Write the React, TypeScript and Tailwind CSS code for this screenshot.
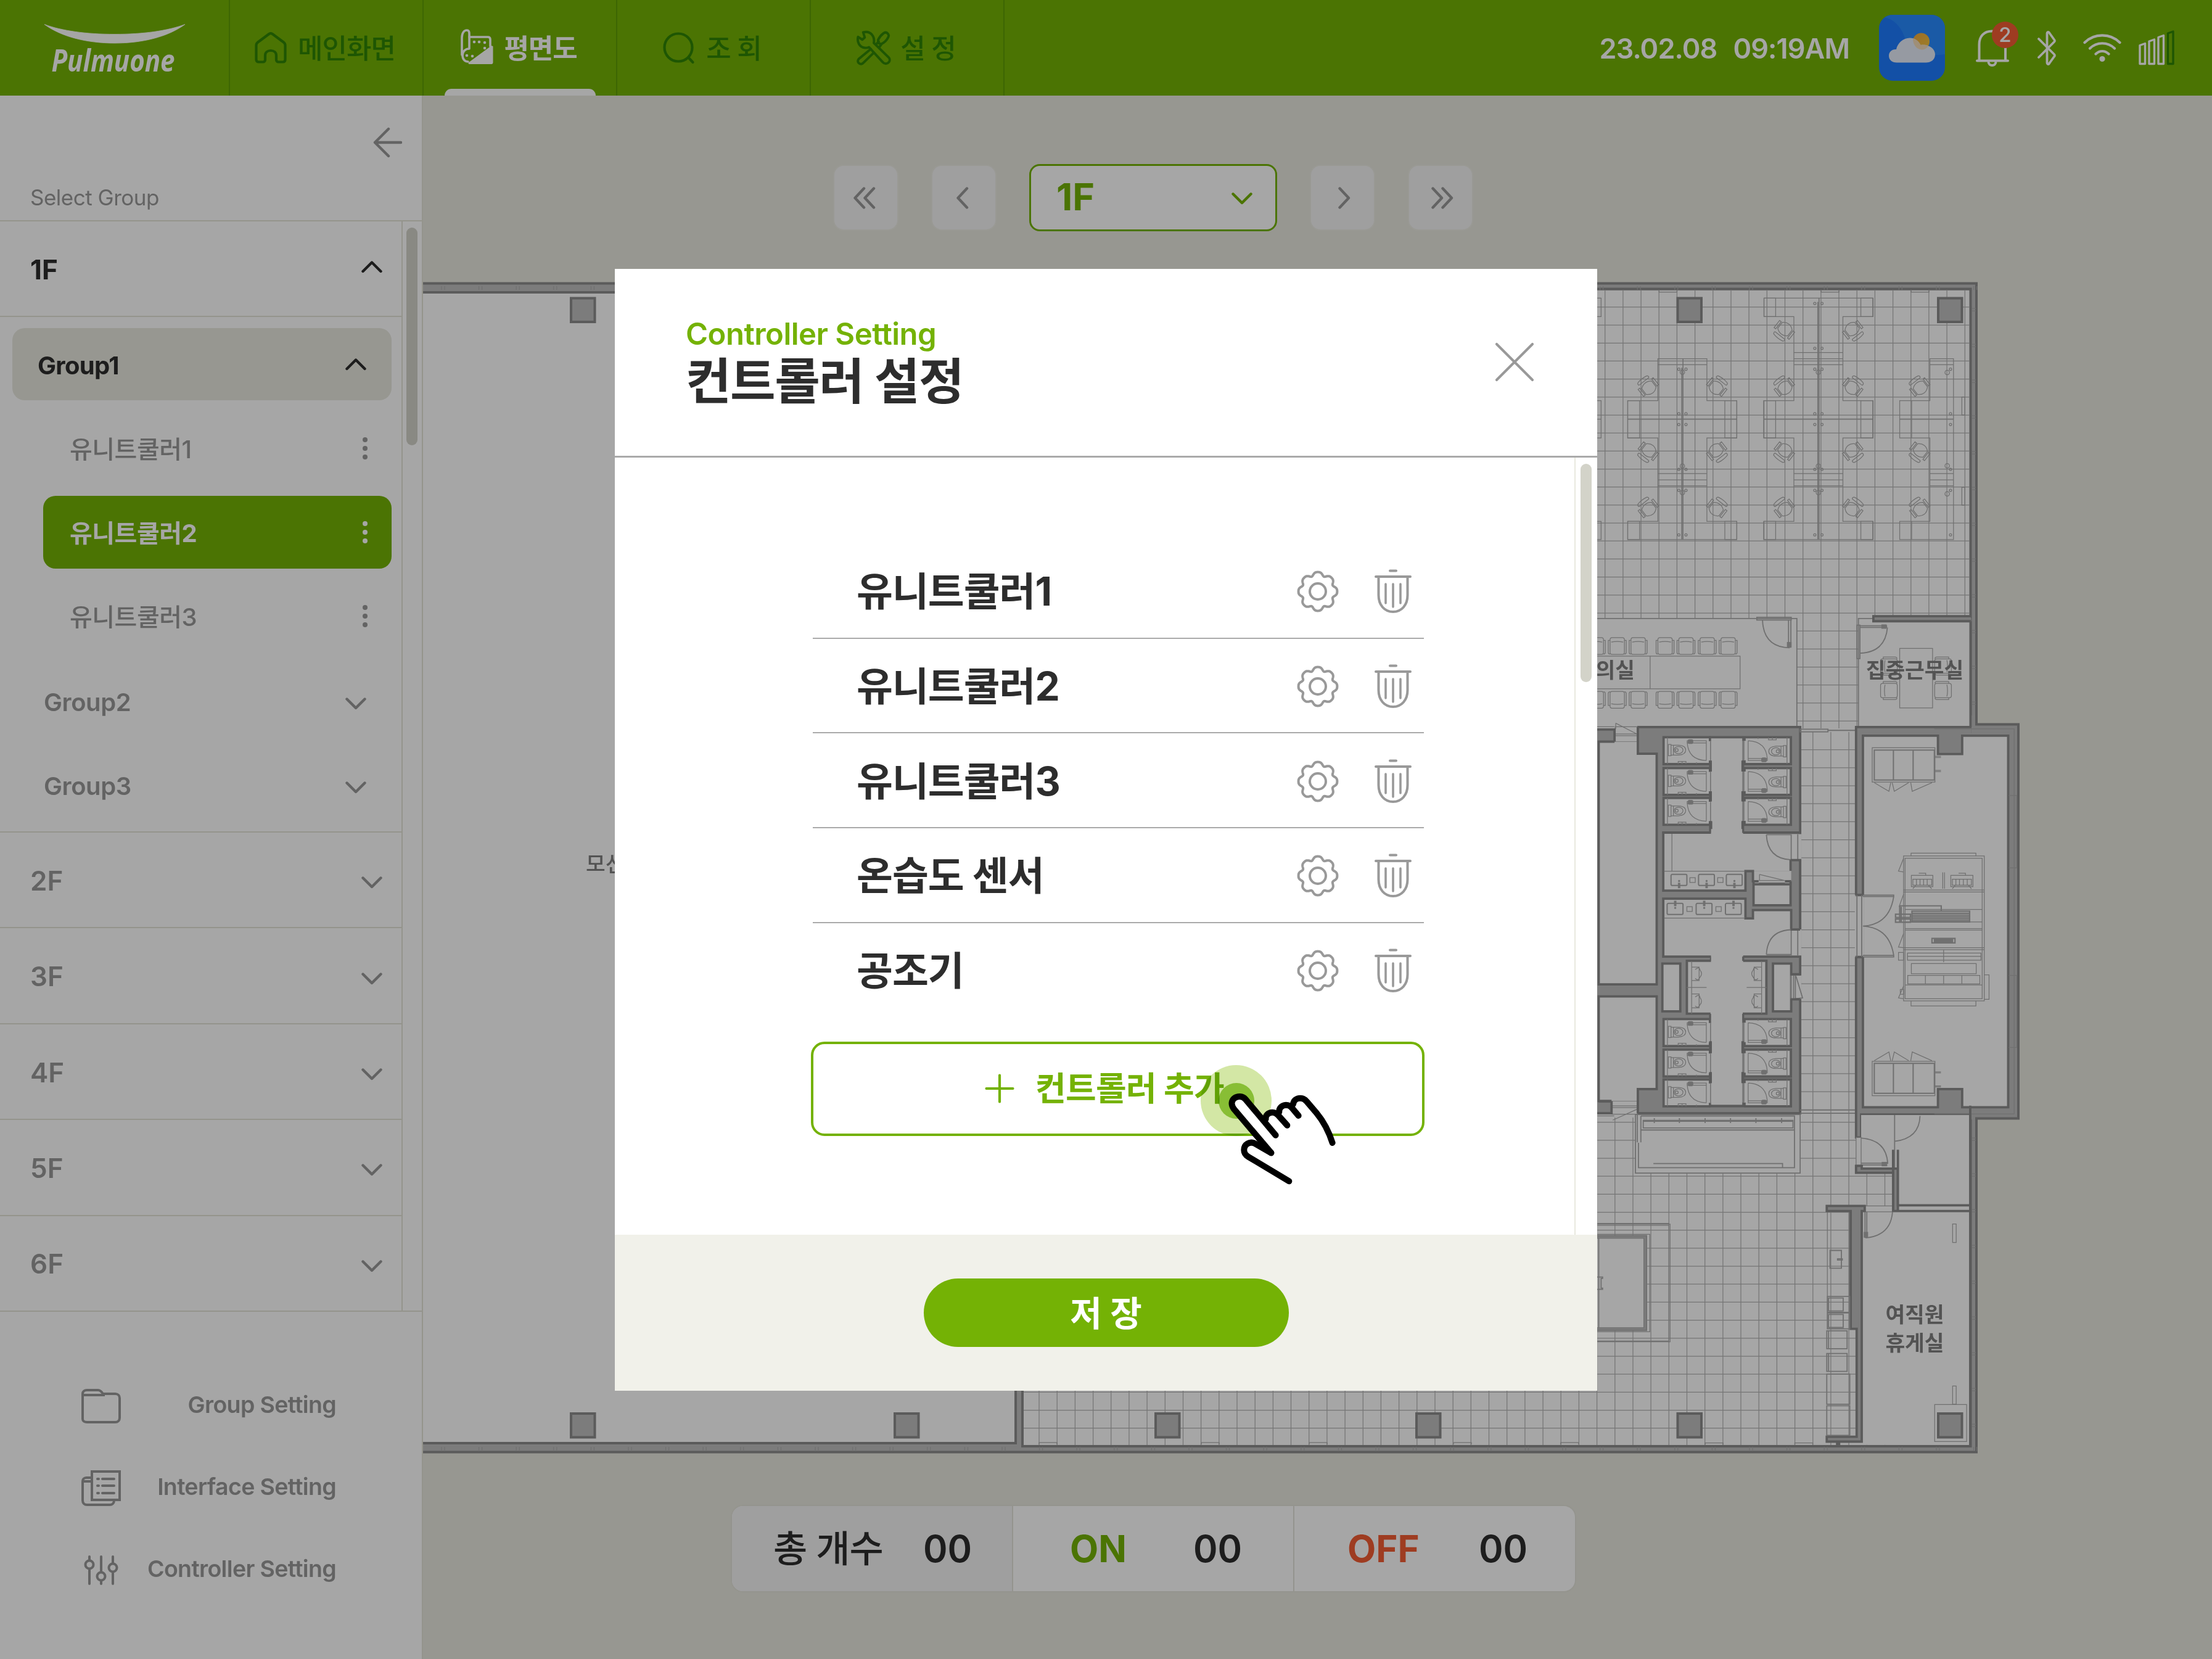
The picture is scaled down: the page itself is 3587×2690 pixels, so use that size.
import React from 'react';

type IconProps = { className?: string };

const Chevron = ({ dir, className = '' }: { dir: 'up' | 'down' | 'left' | 'right'; className?: string }) => {
  const d = {
    up: 'M2.5 18 17 3.5 31.5 18',
    down: 'M2.5 3.5 17 18 31.5 3.5',
    left: 'M18 2.5 3.5 18 18 33.5',
    right: 'M3.5 2.5 18 18 3.5 33.5',
  }[dir];
  const box = dir === 'up' || dir === 'down' ? '0 0 34 21' : '0 0 21 36';
  return (
    <svg viewBox={box} className={className} fill="none" stroke="currentColor" strokeWidth="4.4" strokeLinecap="round" strokeLinejoin="round">
      <path d={d} />
    </svg>
  );
};

/* ---------- header ---------- */

const Logo = () => (
  <svg viewBox="0 0 372 154" className="h-[154px] w-[372px]">
    <path d="M72 39.500C100 50 140 55.500 186 55.500S272 50 300 39.500C272 60 230 70 186 70S100 60 72 39.500Z" fill="#fff" stroke="#fff" strokeWidth="0.8" />
    <text x="83.500" y="116" textLength="200" lengthAdjust="spacingAndGlyphs" fontSize="51" fontStyle="italic" fontWeight="700" fontFamily="Open Sans, Noto Sans, sans-serif" fill="#fff">
      Pulmuone
    </text>
  </svg>
);

const HomeIcon = ({ className }: IconProps) => (
  <svg viewBox="0 0 52 51" className={className} fill="none" stroke="currentColor" strokeWidth="4.2" strokeLinejoin="round">
    <path d="M2.500 21.500C2.500 19.500 3.300 18 4.800 16.800L23 3.200C24.800 1.900 27.200 1.900 29 3.200L47.200 16.800C48.700 18 49.500 19.500 49.500 21.500V44.500C49.500 47 48 48.500 45.500 48.500H38.500C36.500 48.500 35 47 35 45V38C35 33 31 30 26 30S17 33 17 38V45C17 47 15.500 48.500 13.500 48.500H6.500C4 48.500 2.500 47 2.500 44.500Z" />
  </svg>
);

const PlanIcon = ({ className }: IconProps) => (
  <svg viewBox="0 0 54 58" className={className} fill="none" stroke="currentColor" strokeWidth="3.600" strokeLinejoin="round" strokeLinecap="round">
    <path d="M2 42V14C2 6 6 2 10 2C13 2 14 4 14 8V32C8 32 3 36 3 43C3 49 7 53 12 53" />
    <path d="M14 13H44C46 13 48 14 48 17V28" />
    <path d="M52.500 28V54C52.500 56 51.500 57 50 57H14C12.500 57 12 55.500 13 54.200L50 27Z" fill="currentColor" stroke="none" />
    <g fill="currentColor" stroke="none">
      <circle cx="22" cy="21" r="2.300" /><circle cx="30" cy="21" r="2.300" /><circle cx="39" cy="22" r="2.300" />
      <circle cx="39" cy="31" r="2.300" /><circle cx="10" cy="43" r="2.300" /><circle cx="19" cy="44" r="2.300" />
    </g>
  </svg>
);

const SearchIcon = ({ className }: IconProps) => (
  <svg viewBox="0 0 52 52" className={className} fill="none" stroke="currentColor" strokeWidth="4.200" strokeLinecap="round">
    <circle cx="25" cy="25" r="22.500" />
    <path d="M42 42 48.500 49" />
  </svg>
);

const ToolsIcon = ({ className }: IconProps) => (
  <svg viewBox="0 0 58 58" className={className} fill="none" stroke="currentColor" strokeWidth="4" strokeLinejoin="round" strokeLinecap="round">
    <path d="M11.500 3.500 14 12 10 15.500 3 11C1 19 5 28 14 29C17 29.300 19 29 21 28L44 53C46.500 56 51 56 53.500 53C56 50.500 55.500 47 53.500 45L29 21C31 11 24 0 11.500 3.500Z" />
    <path d="M24 31 4.500 47C2 49.500 2 52.500 4.500 54.500C7 56.500 10 56 12 53.500L29 37" />
    <path d="M33 23 37 18.500M38 28 42 22.500M36 16C38 12 41 8 45 5C48 2.500 50 3.500 52 5.500C54 8 54 9 52.500 12C50 17 47 20 41 23L36 21Z" />
  </svg>
);

const WeatherIcon = ({ className }: IconProps) => (
  <svg viewBox="0 0 107 107" className={className}>
    <defs>
      <clipPath id="weather-clip"><rect width="107" height="107" rx="22" /></clipPath>
      <linearGradient id="weather-sun" x1="0" y1="0" x2="1" y2="1"><stop offset="0" stopColor="#f3a73c" /><stop offset="1" stopColor="#f0c63f" /></linearGradient>
    </defs>
    <g clipPath="url(#weather-clip)">
      <rect width="107" height="107" fill="#1e7bff" />
      <path d="M8 0H107V64C75 70 45 50 42 38C36 18 22 6 8 4Z" fill="#288bff" />
    </g>
    <circle cx="68.500" cy="43" r="13.500" fill="url(#weather-sun)" />
    <path d="M29 77.500C21 77.500 16 73 16 66.500C16 60 21 55.500 28 56C30 46 39 37.500 50 37.500C58 37.500 64 42 67.500 49C79 47 91 54 91 64C91 73 84 77.500 76 77.500Z" fill="#e6edf9" />
    <path d="M55 38.200C60.500 39.800 65 44 67.500 49C72 48 77 48.500 80 50.500C77 55 73 57 68.500 56.500C60 55 55 48 55 38.200Z" fill="#f5dcb8" />
  </svg>
);

const BellIcon = ({ className }: IconProps) => (
  <svg viewBox="0 0 54 60" className={className} fill="none" stroke="#fff" strokeWidth="4" strokeLinecap="round">
    <path d="M5.500 50V24C5.500 11 13 2.500 26.500 2.500S48 11 48 24V50M2 50.500H52M20.500 52C20.500 60 32.500 60 32.500 52" />
  </svg>
);

const BluetoothIcon = ({ className }: IconProps) => (
  <svg viewBox="0 0 32 58" className={className} fill="none" stroke="#fff" strokeWidth="3.800" strokeLinecap="round" strokeLinejoin="round">
    <path d="M3 14 28 39C29.500 40.500 29 42 27.500 43.500L20 54C18.500 56 16.500 55 16.500 53V5C16.500 3 18.500 2 20 4L27.500 14.500C29 16 29.500 17.500 28 19L3 44" />
  </svg>
);

const WifiIcon = ({ className }: IconProps) => (
  <svg viewBox="0 0 62 46" className={className} fill="none" stroke="#fff" strokeWidth="4.200" strokeLinecap="round">
    <path d="M2.500 14C18-1.500 44-1.500 59.500 14M11 23.500C22 12.500 40 12.500 51 23.500M20.500 32.500C26.500 26.500 35.500 26.500 41.500 32.500" />
    <circle cx="31" cy="40.500" r="4.600" fill="#fff" stroke="none" />
  </svg>
);

const SignalIcon = ({ className }: IconProps) => (
  <svg viewBox="0 0 58 57" className={className} fill="none" strokeWidth="3.400" strokeLinejoin="round">
    <path stroke="#fff" d="M2 54.500V24.500L10.500 21.500V54.500ZM17 54.500V18L25.500 15V54.500ZM32 54.500V11.500L40.500 8.500V54.500Z" />
    <path stroke="#2f8406" d="M47.500 54.500V5L56 2V54.500Z" />
  </svg>
);

const NAV = [
  { label: '메인화면', Icon: HomeIcon, icon: 'h-[51px] w-[52px] mr-[18px]', active: false },
  { label: '평면도', Icon: PlanIcon, icon: 'h-[58px] w-[54px] mr-[17px] -mt-1', active: true },
  { label: '조 회', Icon: SearchIcon, icon: 'h-[52px] w-[52px] mr-[18px]', active: false },
  { label: '설 정', Icon: ToolsIcon, icon: 'h-[57px] w-[58px] mr-[14px]', active: false },
];

const Header = () => (
  <header className="flex h-[155px] w-full items-stretch bg-[#74b205]">
    <div className="w-[373px] border-r-2 border-[#5f9d06]"><Logo /></div>
    {NAV.map(({ label, Icon, icon, active }) => (
      <div
        key={label}
        className={
          active
            ? 'relative flex w-[314px] items-center justify-center border-r-2 border-[#5f9d06] pr-[4px] text-white'
            : 'relative flex w-[314px] items-center justify-center border-r-2 border-[#5f9d06] pr-[4px] text-[#2f8406]'
        }
      >
        <Icon className={icon} />
        <span className={active ? 'pt-[2px] text-[44px] leading-none font-bold tracking-[-1.200px]' : 'pt-[2px] text-[44px] leading-none font-medium tracking-[-1px]'}>{label}</span>
        {active && <div className="absolute bottom-0 left-[34px] h-[11px] w-[245px] rounded-t-[12px] bg-white" />}
      </div>
    ))}
    <div className="ml-auto flex items-center pr-[61px] text-white">
      <span className="mr-[26px] pt-[2px] text-[45px] leading-none font-semibold tracking-[-0.900px]">23.02.08</span>
      <span className="mr-[48px] pt-[2px] text-[45px] leading-none font-semibold tracking-[-0.900px]">09:19AM</span>
      <WeatherIcon className="h-[107px] w-[107px]" />
      <div className="relative ml-[50px] h-[60px] w-[54px]">
        <BellIcon className="h-[60px] w-[54px]" />
        <span className="absolute top-[-13px] left-[26px] flex h-[43px] w-[43px] items-center justify-center rounded-full bg-[#f35c34] text-[33px] leading-none font-medium">2</span>
      </div>
      <BluetoothIcon className="ml-[45px] h-[58px] w-[32px]" />
      <WifiIcon className="ml-[43px] h-[46px] w-[62px]" />
      <SignalIcon className="ml-[28px] h-[57px] w-[58px]" />
    </div>
  </header>
);

/* ---------- sidebar ---------- */

const Dots = () => (
  <div className="flex w-2 flex-col items-center gap-[6px]">
    <i className="h-[8px] w-[8px] rounded-full bg-current" />
    <i className="h-[8px] w-[8px] rounded-full bg-current" />
    <i className="h-[8px] w-[8px] rounded-full bg-current" />
  </div>
);

const UnitItem = ({ label, selected = false }: { label: string; selected?: boolean }) => (
  <div
    className={
      selected
        ? 'ml-[70px] mr-[16px] flex h-[118px] items-center justify-between rounded-[20px] bg-[#74b205] pr-[39px] pl-[43px] text-white'
        : 'ml-[70px] mr-[16px] flex h-[118px] items-center justify-between rounded-[20px] pr-[39px] pl-[43px] text-[#999]'
    }
  >
    <span className={selected ? 'pt-[3px] text-[40px] leading-none font-bold tracking-[-0.500px]' : 'pt-[3px] text-[40px] leading-none font-medium tracking-[-0.500px]'}>{label}</span>
    <Dots />
  </div>
);

const GroupItem = ({ label }: { label: string }) => (
  <div className="flex h-[136px] items-center justify-between pt-[3px] pr-[57px] pl-[71px] text-[#999]">
    <span className="text-[40px] leading-none font-semibold tracking-[-0.400px]">{label}</span>
    <Chevron dir="down" className="mt-[3px] h-[21px] w-[34px]" />
  </div>
);

const FolderIcon = () => (
  <svg viewBox="0 0 64 58" className="h-[58px] w-[64px]" fill="none" stroke="currentColor" strokeWidth="4">
    <path d="M2 50V9C2 5 5 3 9 3H27C31 3 33 6 35 9H55C59 9 62 12 62 16V48C62 52 59 55 55 55H9C5 55 2 53 2 50ZM2 11H38" />
  </svg>
);

const InterfaceIcon = () => (
  <svg viewBox="0 0 64 60" className="h-[60px] w-[64px]" fill="none" stroke="currentColor" strokeWidth="4" strokeLinecap="round">
    <path d="M17 3H62V49H17ZM17 13H8C4 13 2 16 2 19V50C2 54 5 57 9 57H46C50 57 53 54 53 50M4 19H16" />
    <path d="M26 15H28M34 15H53M26 26H28M34 26H53M26 38H28M34 38H53" />
  </svg>
);

const SlidersIcon = () => (
  <svg viewBox="0 0 64 50" className="h-[50px] w-[64px]" fill="none" stroke="currentColor" strokeWidth="4" strokeLinecap="round">
    <path d="M13 3V9M13 23V47M32 3V28M32 42V47M51 3V14M51 28V47" />
    <circle cx="13" cy="16" r="6.500" /><circle cx="32" cy="35" r="6.500" /><circle cx="51" cy="21" r="6.500" />
  </svg>
);

const Sidebar = () => (
  <aside className="flex h-[2535px] w-[686px] shrink-0 flex-col border-r-2 border-[#e4e4d8] bg-white">
    <div className="flex h-[204px] flex-col border-b-2 border-[#e4e4d8]">
      <svg viewBox="0 0 48 50" className="mt-[51px] ml-[604px] h-[50px] w-[48px]" fill="none" stroke="#999" strokeWidth="4.400" strokeLinecap="round" strokeLinejoin="round">
        <path d="M26 3 4 25 26 47M4 25H46" />
      </svg>
      <span className="mt-[47px] ml-[49px] text-[35px] leading-none tracking-[-0.500px] text-[#999]">Select Group</span>
    </div>
    <div className="flex h-[1768px] border-b-2 border-[#e4e4d8]">
      <div className="flex w-[653px] flex-col border-r-2 border-[#e4e4d8]">
        <div className="flex h-[155px] items-center justify-between border-b-2 border-[#e4e4d8] pr-[31px] pl-[49px] text-[#2d2d2d]">
          <span className="pt-[2px] text-[44px] leading-none font-bold">1F</span>
          <Chevron dir="up" className="mt-[-6px] h-[21px] w-[34px]" />
        </div>
        <div className="flex h-[836px] flex-col border-b-2 border-[#e4e4d8] pt-[18px]">
          <div className="mr-[16px] ml-[20px] flex h-[117px] items-center justify-between rounded-[20px] bg-[#e9e9df] pr-[41px] pl-[41px] text-[#2d2d2d]">
            <span className="pt-[4px] text-[40px] leading-none font-bold tracking-[-0.700px]">Group1</span>
            <Chevron dir="up" className="h-[21px] w-[34px]" />
          </div>
          <div className="mt-[19px] flex flex-col gap-[18px]">
            <UnitItem label="유니트쿨러1" />
            <UnitItem label="유니트쿨러2" selected />
            <UnitItem label="유니트쿨러3" />
          </div>
          <div className="mt-[11px] flex flex-col">
            <GroupItem label="Group2" />
            <GroupItem label="Group3" />
          </div>
        </div>
        {['2F', '3F', '4F', '5F', '6F'].map((f) => (
          <div key={f} className="flex flex-1 items-center justify-between border-b-2 border-[#e4e4d8] pt-[2px] pr-[31px] pl-[49px] text-[#999] last:border-b-0">
            <span className="text-[44px] leading-none font-semibold">{f}</span>
            <Chevron dir="down" className="mt-[6px] h-[21px] w-[34px]" />
          </div>
        ))}
      </div>
      <div className="pt-[10px] pl-[6px]">
        <div className="h-[353px] w-[18px] rounded-full bg-[#d3d3c9]" />
      </div>
    </div>
    <div className="flex flex-col pt-[86px] text-[#999]">
      {[
        { label: 'Group Setting', Icon: FolderIcon },
        { label: 'Interface Setting', Icon: InterfaceIcon },
        { label: 'Controller Setting', Icon: SlidersIcon },
      ].map(({ label, Icon }) => (
        <div key={label} className="flex h-[133px] items-center justify-between pr-[139px] pl-[132px]">
          <Icon />
          <span className="-mt-[4px] text-[37.500px] leading-none font-semibold tracking-[-0.650px]">{label}</span>
        </div>
      ))}
    </div>
  </aside>
);

/* ---------- floor plan ---------- */

const WALL = '#bfbfbf';
const EDGE = '#8c8c8c';
const THIN = '#acacac';
const TILE = '#b4b4b4';

const gridPath = (x0: number, y0: number, x1: number, y1: number, ox: number, oy: number, step = 29.18) => {
  let d = '';
  const firstX = ox + Math.ceil((x0 - ox) / step) * step;
  const firstY = oy + Math.ceil((y0 - oy) / step) * step;
  for (let x = firstX; x < x1; x += step) d += `M${x.toFixed(1)} ${y0}V${y1}`;
  for (let y = firstY; y < y1; y += step) d += `M${x0} ${y.toFixed(1)}H${x1}`;
  return d;
};

const Pillar = ({ x, y }: { x: number; y: number }) => (
  <rect x={x + 2} y={y + 2} width="38.500" height="38.500" fill={WALL} stroke={EDGE} strokeWidth="4" />
);

const SwivelChair = ({ x, y, r }: { x: number; y: number; r: number }) => (
  <g transform={`translate(${x} ${y}) rotate(${r})`}>
    <path d="M-21 -12C-8 -23 8 -23 21 -12V12C8 25 -8 25 -21 12ZM-20 -27H20C23 -27 23 -35 18 -36Q0 -40 -18 -36C-23 -35 -23 -27 -20 -27ZM-32 -18H-25V12H-32ZM25 -18H32V12H25Z" />
  </g>
);

const MeetingChair = ({ x, y, r = 0 }: { x: number; y: number; r?: number }) => (
  <g transform={`translate(${x + 29} ${y + 29}) rotate(${r})`}>
    <rect x="-24" y="-29" width="48" height="56" rx="7" />
    <path d="M-20 -14Q0 -18 20 -14M-24 -20H-30V20Q-30 26 -24 26M24 -20H30V20Q30 26 24 26" />
  </g>
);

const Stall = ({ y }: { y: number }) => {
  const half = (
    <g>
      <path d="M441 0H284V90H441" fill="#fff" stroke={EDGE} strokeWidth="3.800" />
      <path d="M441 0V13M441 78V90" stroke={EDGE} strokeWidth="5.500" />
      <path d="M427 14V78M441 14V78M297 0V90M363 12H427V19H363ZM363 16Q366 76 427 78M333 90V81H359V90M346 81V90M394 90V84" />
      <rect x="366" y="8" width="16" height="13" rx="4" fill={THIN} />
      <path d="M300 24H309V62H300ZM309 27H317V60H309M317 27H334Q358 28 358 43T334 60H317Z" />
      <ellipse cx="334" cy="43" rx="15" ry="12" />
      <circle cx="328" cy="43" r="5" />
    </g>
  );
  return (
    <g transform={`translate(0 ${y})`}>
      {half}
      <g transform="rotate(180 497 45)">{half}</g>
    </g>
  );
};

const Basin = ({ x, y, flip = false }: { x: number; y: number; flip?: boolean }) => (
  <g transform={flip ? `translate(${x} ${y + 37}) scale(1 -1)` : `translate(${x} ${y})`} strokeWidth="2">
    <rect width="53" height="37" rx="4" fill="#fff" />
    <path d="M25 30V44H29V30Z" />
    <circle cx="27" cy="22" r="1.500" />
  </g>
);

const Urinals = () => (
  <g>
    <path d="M378 822V998M361 910H428M378 842H403V887H378M378 932H403V978H378M390 850Q404 838 406 852Q416 864 406 876Q400 890 390 880M390 942Q404 930 406 944Q416 956 406 968Q400 982 390 972" />
  </g>
);

const Cabinet = ({ flip = false }: { flip?: boolean }) => (
  <g transform={flip ? 'translate(0 1380) scale(1 -1)' : undefined}>
    <path d="M982 108H1192V223H982ZM1192 137H1212M1192 141H1212M1192 184H1212M1192 188H1212" />
    <path d="M989 116H1190V216H989ZM1053 116V216M1119 116V216" strokeWidth="2" />
    <path d="M989 225 1038 254 1044 225M1049 225 1056 254 1104 225M1111 225 1116 254 1182 225" />
  </g>
);

const AirHandler = () => (
  <g>
    <path d="M1087 470H1357V955H1087ZM1092 478H1350V948H1092ZM1112 461H1329V470H1112ZM1112 955H1329V972H1112ZM1357 868H1373V950H1357Z" />
    <path d="M1087 584H1357M1087 591H1357M1092 649H1350M1092 691H1350M1092 713H1350M1092 718H1350M1087 777H1357M1087 784H1357M1100 795H1346V819H1100ZM1100 806H1346M1092 902H1350M1221 784V826" />
    <path d="M1113 830H1330V864H1113ZM1101 870H1342V898H1101ZM1160 870V898M1221 870V898M1282 870V898" />
    <path d="M1113 535H1185V573H1113ZM1118 548H1181V568H1118ZM1245 535H1319V573H1245ZM1250 548H1314V568H1250ZM1138 528H1161V535M1271 528H1294V535M1130 548V568M1142 548V568M1154 548V568M1166 548V568M1262 548V568M1274 548V568M1287 548V568M1300 548V568M1218 525V580M1224 525V580M1118 580 1128 568H1170L1181 580M1250 580 1260 568H1304L1314 580" />
    <path d="M1115 655H1308V691H1115ZM1115 662H1308M1115 668H1308M1115 674H1308M1115 680H1308M1115 686H1308M1074 637H1213V655M1074 637V692M1079 640V692M1060 665H1110V676H1060ZM1060 681H1110V692H1060Z" strokeWidth="2.200" />
    <path d="M1182 746H1259V761H1182ZM1188 750H1253M1188 754H1253M1188 758H1253" strokeWidth="2.200" />
    <path d="M1087 478 1070 521 1087 524M1087 598 1072 640M1087 730 1070 775 1087 777M1087 905 1070 945 1087 948M1070 793H1087V819H1070ZM1076 917H1087V933H1076Z" />
  </g>
);

const DeskBlock = ({ x, tall = false }: { x: number; tall?: boolean }) => (
  <g transform={`translate(${x} 0)`}>
    <path
      d={
        tall
          ? 'M-182 110H183V172H82V453H183V578H82V857H183V918H-182V857H-82V578H-182V453H-82V172H-182Z'
          : 'M-82 313H82V453H182V578H82V857H182V918H-183V857H-82V578H-183V453H-82Z'
      }
    />
    <path d="M-183 453H-143V578H-183ZM142 453H182V578H142ZM-183 857H-143V918H-183ZM142 857H182V918H142ZM-82 333H82M-82 697H82M-82 718H82M-82 738H82" />
    {tall && <path d="M-182 110H-143V172H-182ZM142 110H182V172H142ZM-82 292H82M-82 313H82" />}
    <path d={tall ? 'M-2 123V918M2 110V918M-183 515H183' : 'M-2 343V918M2 313V918M-183 515H183'} strokeWidth="1.600" />
    {[348, 497, 533, 683, 753, 902].concat(tall ? [128, 278] : []).map((y) => (
      <g key={y}><circle cx="-12" cy={y} r="4" /><circle cx="12" cy={y} r="4" /></g>
    ))}
    {[358, 672, 761].map((y) => <circle key={y} cx="0" cy={y} r="7.500" />)}
    <SwivelChair x={-112} y={410} r={-38} />
    <SwivelChair x={113} y={410} r={38} />
    <SwivelChair x={-112} y={620} r={-142} />
    <SwivelChair x={113} y={620} r={142} />
    <SwivelChair x={-112} y={816} r={-38} />
    <SwivelChair x={113} y={816} r={38} />
    {tall && <><SwivelChair x={-112} y={214} r={-142} /><SwivelChair x={113} y={214} r={142} /></>}
  </g>
);

const FloorPlan = () => (
  <svg
    viewBox="686 455 2901 1905"
    className="h-[1905px] w-[2901px] [&_*]:[vector-effect:non-scaling-stroke]"
    fill="none"
    stroke={THIN}
    strokeWidth="1.250"
  >
    {/* outer shell */}
    <path d="M680 459.500H3205V1174.500H3273V1813.500H3205V2354.500H680Z" fill={WALL} stroke={EDGE} strokeWidth="4" />
    <path d="M680 474H1652V470H3196V2344H1658V2339.500H680Z" fill="#fff" />
    <path d="M680 474H1652V468.500H3195.500V1160M3195.500 1815V2345H1658V2255" stroke={EDGE} strokeWidth="4" />
    <path d="M1647 2255V2340H680" stroke={EDGE} strokeWidth="4" />
    <rect x="1649" y="470" width="7" height="1874" fill={WALL} stroke="none" />
    <path d={Array.from({ length: 42 }, (_, i) => `M${716 + i * 60.600} 464v6M${721 + i * 60.600} 464v6M${716 + i * 60.600} 2346v7M${721 + i * 60.600} 2346v7`).join('')} />
    <path d={Array.from({ length: 12 }, (_, i) => `M3198 ${500 + i * 58}h6M3198 ${504 + i * 58}h6`).join('') + Array.from({ length: 10 }, (_, i) => `M3198 ${1845 + i * 58}h6M3198 ${1849 + i * 58}h6`).join('')} />

    {/* floor tiles */}
    <g stroke={TILE}>
      <path d={gridPath(2500, 470, 3194, 1003, 2602.700, 497.900)} />
      <path d={gridPath(2914, 1003, 3013, 1181, 2602.700, 497.900)} />
      <path d={gridPath(2919, 1187, 3008, 1806, 2589.600, 1215.700)} />
      <path d={gridPath(1660, 1806, 3068, 2343, 2589.600, 1848.800)} />
    </g>

    {/* columns */}
    <Pillar x={924} y={481.500} />
    <Pillar x={2718.500} y={481.500} />
    <Pillar x={3141} y={481.500} />
    {[924, 1449, 1872, 2295, 2718.500].map((x) => <Pillar key={x} x={x} y={2290} />)}

    {/* open office */}
    <g transform="translate(2560 430) scale(0.48469)">
      <DeskBlock x={347} />
      <DeskBlock x={802} tall />
      <path d="M1175 313H1254V918H1074V857H1175V578H1074V453H1175ZM1074 453H1114V578H1074ZM1074 857H1114V918H1074ZM1175 333H1254M1175 697H1254M1175 718H1254M1175 738H1254" />
      <path d="M1074 515H1254" strokeWidth="1.600" />
      {[348, 497, 533, 683, 753, 902].map((y) => <circle key={y} cx="1244" cy={y} r="4" />)}
      {[359, 671, 765].map((y) => <circle key={y} cx="1233" cy={y} r="7.500" />)}
      <SwivelChair x={1143} y={410} r={-38} />
      <SwivelChair x={1143} y={620} r={-142} />
      <SwivelChair x={1143} y={816} r={-38} />
      <path d="M61 110H75V172H61M61 453H75V578H61M61 515H75M61 857H75V918H61M269 83V90H329V83M811 83V90H871V83M1112 83V90H1172V83M1282 441H1292V501H1282ZM1282 743H1292V803H1282Z" />

      {/* meeting room */}
      <path d="M0 1182H730V1545H0Z" fill="#fff" strokeWidth="1.800" />
      <path d="M0 1308H540V1417H0M239 1308V1417" />
      {[30, 100, 170, 260, 330, 401, 471].map((x) => (
        <g key={x}><MeetingChair x={x} y={1246} /><MeetingChair x={x} y={1424} r={180} /></g>
      ))}
      <path d="M596 1178H711V1187H596ZM702 1187V1278H710V1187M615 1187Q618 1278 706 1280" strokeWidth="1.800" />
      <rect x="698" y="1262" width="13" height="15" fill={THIN} />

      {/* focus room */}
      <path d="M936 1182H1312V1545H936Z" fill="#fff" strokeWidth="1.800" />
      <path d="M1312 1174H986V1191H1312" fill={WALL} stroke={EDGE} strokeWidth="3.800" />
      <path d="M1311 1191V1545" stroke={EDGE} strokeWidth="3.800" />
      <path d="M1074 1282H1184V1481H1074Z" />
      <MeetingChair x={1010} y={1312} r={-90} />
      <MeetingChair x={1189} y={1312} r={90} />
      <MeetingChair x={1010} y={1394} r={-90} />
      <MeetingChair x={1189} y={1394} r={90} />
      <path d="M931 1204H941V1316H931ZM941 1206H1030V1212H941M1033 1212Q1026 1295 941 1298" strokeWidth="1.800" />
      <rect x="1014" y="1203" width="15" height="12" fill={THIN} />
    </g>

    <g transform="translate(2560 1160) scale(0.48469)">
      {/* service core */}
      <path d="M0 39H741V1331H0Z" fill={WALL} stroke={EDGE} strokeWidth="3.800" />
      <path d="M0 30H196V45H0ZM0 1333H196V1345H0Z" fill="#fff" stroke="none" />
      <path d="M122 38H196V88H122ZM112 1290H196V1334H112Z" fill="#fff" />
      <path d="M122 62H196M122 68H196M112 1306H196M112 1312H196M124 26 194 62M124 26V45M114 1354 194 1318M0 38H119M0 1340H119" />
      <path d="M0 47H120V88H67M0 1331H110V1291H67" stroke={EDGE} strokeWidth="3.800" />
      <path d="M67 88H198V128H261V900H67Z" fill="#fff" stroke="none" />
      <path d="M120 88H67V900H261V128H198V39" stroke={EDGE} strokeWidth="3.800" />
      <path d="M67 940H261V1250H198V1290H67Z" fill="#fff" stroke="none" />
      <path d="M110 1290H67V940H261V1250H198V1331" stroke={EDGE} strokeWidth="3.800" />

      {[73, 176, 276, 1016, 1118, 1218].map((y) => <Stall key={y} y={y} />)}
      <path d="M443 76H547V400H443ZM443 800H547V1303H443Z" fill="#fff" stroke="none" />
      <path d="M437 73H553M437 1307H553" stroke={EDGE} strokeWidth="3.800" />
      <path d="M441 151V188M441 254V288M441 354V390M549 151V188M549 254V288M549 354V390M441 1090V1130M441 1193V1230M549 1090V1130M549 1193V1230M441 998V1020M549 998V1020" stroke={EDGE} strokeWidth="4.500" />

      {/* washrooms */}
      <path d="M284 394H711V521H583V521H556V585H284Z" fill="#fff" stroke="none" />
      <path d="M583 521H711V635H583Z" fill="#fff" stroke="none" />
      <path d="M443 392H283V586H558V521H583V555H602M550 392H741M690 555H711M583 565H711M585 555V635H709V555M443 354V392M549 354V392" stroke={EDGE} strokeWidth="3.800" />
      <path d="M443 380H547V400H443Z" fill="#fff" stroke="none" />
      <path d="M312 396V521M286 521H556M603 552H690M603 560H690M605 532 688 552M605 532V552" />
      <Basin x={309} y={532} /><Basin x={401} y={532} /><Basin x={494} y={532} />
      <rect x="372" y="543" width="18" height="16" /><rect x="465" y="543" width="18" height="16" />
      <path d="M284 613H556V679H583V650H711V806H284Z" fill="#fff" stroke="none" />
      <path d="M443 807H283V613H558V679H583V651H711V715M550 807H741" stroke={EDGE} strokeWidth="3.800" />
      <path d="M286 678H556" />
      <Basin x={296} y={629} flip /><Basin x={393} y={629} flip /><Basin x={491} y={629} flip />
      <rect x="362" y="640" width="18" height="16" /><rect x="459" y="640" width="18" height="16" />

      <path d="M362 821H628V998H362Z" fill="#fff" stroke="none" />
      <path d="M443 821H362V998H441M550 821H628V998H549M443 807V821M550 807V821" stroke={EDGE} strokeWidth="3.800" />
      <Urinals />
      <g transform="translate(990 0) scale(-1 1)"><Urinals /></g>
      <path d="M280 830H340V990H280ZM650 830H711V990H650Z" fill="#fff" stroke={EDGE} strokeWidth="3.800" />
      <path d="M443 803H547V826H443ZM443 990H547V1022H443Z" fill="#fff" stroke="none" />

      {/* core doors */}
      <path d="M707 397H745V484H707ZM707 716H745V803H707ZM709 870H745V948H709Z" fill="#fff" stroke="none" />
      <path d="M711 397V484M733 397V484M711 716V803M733 716V803M711 870V948M719 870V948M725 870V948L749 945 727 872M628 399H711M628 399Q632 480 711 483M628 800H711M628 800Q632 720 711 717" strokeWidth="1.800" />
      <path d="M709 484H741V716M709 484V520M709 716H741M709 866H741M709 950H741" stroke={EDGE} strokeWidth="3.800" />

      {/* corridor thresholds */}
      <path d="M741 46H834V55H741ZM834 50H925M741 1320H925M741 1331H925" strokeWidth="1.800" />

      {/* pantry counter */}
      <path d="M190 1335H741V1531H190Z" fill="#fff" strokeWidth="1.800" />
      <path d="M208 1340H722V1513H200V1430M208 1340V1428M196 1335V1428M216 1355H717V1380H216ZM208 1387H722M250 1499H682V1513M253 1347V1364M337 1347V1364M423 1347V1364M508 1347V1364M593 1347V1364M679 1347V1364M216 1358H717" strokeWidth="1.800" />

      {/* machine room */}
      <path d="M1312 39H928V1412H945V1335H1312V1320H1400V60H1312Z" fill={WALL} stroke="none" />
      <path d="M1314 39H928V601H951M951 808H928V1412H945V1335H1314" stroke={EDGE} strokeWidth="3.800" />
      <path d="M1190 45H1457V1333H1190" />
      <path d="M951 68H1202V129H1283V68H1437V1311H1283V1250H1202V1311H951Z" fill="#fff" stroke={EDGE} strokeWidth="3.800" />
      <path d="M924 601H955V808H924Z" fill="#fff" stroke="none" />
      <path d="M926 601H951M926 808H951" stroke={EDGE} strokeWidth="3.800" />
      <path d="M931 601V808M947 601V808M951 601H1054V606H951M951 808H1054V803H951M1054 606Q1040 700 951 705Q1040 710 1054 803" strokeWidth="1.800" />
      <Cabinet />
      <Cabinet flip />
      <AirHandler />
      <path d="M1439 268H1466V510H1439M1439 870H1466V1111H1439" />

      {/* lower right lobby */}
      <path d="M945 1337H1310V1800H1070V1515H945Z" fill="#fff" stroke="none" />
      <path d="M1310 1337V1690" stroke={EDGE} strokeWidth="3.800" />
      <path d="M928 1412H945V1505H928Z" fill="#fff" />
      <path d="M1057 1337V1425Q1140 1415 1142 1340M1057 1425V1513M945 1414Q1030 1420 1034 1500M945 1498H1030V1504H945" strokeWidth="1.800" />
      <rect x="1015" y="1495" width="16" height="12" fill={THIN} />
      <path d="M928 1507H947V1516H1068V1837H1312V1882H1052V1530H928Z" fill={WALL} stroke="none" />
      <path d="M1312 1837H1068V1516H947V1507H928V1530H1052V1882H1312" stroke={EDGE} strokeWidth="3.800" />
    </g>

    {/* rest room and pantry wall */}
    <g transform="translate(2560 1900) scale(0.48469 0.35714)">
      <path d="M945 182H1310V1240H945Z" fill="#fff" stroke="none" />
      <path d="M955 155H1050V182H955Z" fill="#fff" />
      <path d="M1070 -80H1310V152H1070Z" fill="#fff" stroke="none" />
      <path d="M1310 -300V152H1068V-100M1052 -100V178H1310V1242" stroke={EDGE} strokeWidth="3.800" />
      <path d="M830 182H905M832 182V565M905 182V713" />
      <path d="M830 155H957V178H947V1225H830V1203H930V713H910V178H830Z" fill={WALL} stroke={EDGE} strokeWidth="3.800" />
      <path d="M868 1228V1242" stroke={EDGE} strokeWidth="7" />
      <path d="M958 182V298H964V182M1050 182Q1044 290 960 300" strokeWidth="1.800" />
      <rect x="955" y="275" width="12" height="22" fill={THIN} />
      <path d="M1251 237H1263V321H1251ZM1251 973H1263V1055H1251ZM1191 1057H1298V1225H1191Z" />
      <path d="M841 357H879V438H841ZM866 395H882V401H866ZM832 566H907V638H832ZM836 573H885V632H836ZM832 641H907V713H832ZM836 648H885V707H836ZM830 722H898V803H830ZM836 722V803M830 825H898V906H830ZM836 825V906M830 919H907V1055H830ZM830 1062H907V1197H830Z" strokeWidth="1.800" />
      <path d="M0 238H306V772H0M0 234H302V775M0 243H302M0 768H302M0 284H238V726H0" />
      <path d="M0 290H227V720H0Z" fill={WALL} strokeWidth="2" />
      <path d="M0 302H218V708H0Z" fill="#fff" />
      <path d="M67 302V708M61 478H80V484H75V528H80V534H61" strokeWidth="1.800" />
      <path d="M423 1240V1231H483V1240M723 1240V1231H783V1240" />
    </g>
    <Pillar x={3141} y={2290} />
    <path d="M1685 2342v-3h29v3M1948 2342v-3h29v3M2123 2342v-3h29v3M2357 2342v-3h29v3M2531 2342v-3h29v3" />

    <g fill="#808080" stroke="none" fontFamily="Noto Sans CJK KR, sans-serif" fontSize="34.500" fontWeight="700">
      <text x="950" y="1413" fontWeight="500">모션</text>
      <text x="2651" y="1099" textAnchor="end">회의실</text>
      <text x="3105" y="1099" textAnchor="middle">집중근무실</text>
      <text x="3105" y="2144" textAnchor="middle">여직원</text>
      <text x="3105" y="2189.500" textAnchor="middle">휴게실</text>
    </g>
  </svg>
);

/* ---------- main area ---------- */

const PagerButton = ({ children }: { children: React.ReactNode }) => (
  <div className="flex h-[107px] w-[106px] items-center justify-center rounded-[17px] border-2 border-[#ebebe3] bg-[#f5f5f5] text-[#999]">{children}</div>
);

const Main = () => (
  <main className="flex h-[2535px] flex-1 flex-col bg-[#e9e9df]">
    <div className="mt-[111px] ml-[665px] flex h-[109px] items-center gap-[53px]">
      <PagerButton>
        <Chevron dir="left" className="-ml-[5px] h-[36px] w-[21px]" />
        <Chevron dir="left" className="-ml-[5px] h-[36px] w-[21px]" />
      </PagerButton>
      <PagerButton><Chevron dir="left" className="-ml-[5px] h-[36px] w-[21px]" /></PagerButton>
      <div className="flex h-[109px] w-[402px] items-center justify-between rounded-[17px] border-[3px] border-[#74b205] bg-white pr-[37px] pl-[41px] text-[#74b205]">
        <span className="-mt-[3px] text-[61px] leading-none font-bold">1F</span>
        <Chevron dir="down" className="mt-[2px] h-[21px] w-[34px]" />
      </div>
      <PagerButton><Chevron dir="right" className="ml-[4px] h-[36px] w-[21px]" /></PagerButton>
      <PagerButton>
        <Chevron dir="right" className="ml-[4px] h-[36px] w-[21px]" />
        <Chevron dir="right" className="-ml-[5px] h-[36px] w-[21px]" />
      </PagerButton>
    </div>
    <div className="mt-[80px]"><FloorPlan /></div>
    <div className="mt-[80px] ml-[499px] flex h-[142px] w-[1371px] overflow-hidden rounded-[20px] border-2 border-[#e4e4da] bg-white text-[60px] leading-none text-[#2d2d2d]">
      <div className="flex w-[456px] items-center border-r-2 border-[#e4e4da] bg-[#f5f5f5] pl-[67px] font-medium">
        <span className="w-[243px] font-medium tracking-[-1px]">총 개수</span>
        <span className="font-semibold">00</span>
      </div>
      <div className="flex w-[456px] items-center border-r-2 border-[#e4e4da] pl-[92px] font-medium">
        <span className="w-[200px] font-bold text-[#74b205]">ON</span>
        <span className="font-semibold">00</span>
      </div>
      <div className="flex flex-1 items-center pl-[86px] font-medium">
        <span className="w-[213px] font-bold text-[#f35c34]">OFF</span>
        <span className="font-semibold">00</span>
      </div>
    </div>
  </main>
);

/* ---------- dialog ---------- */

const gearOutline = (() => {
  const pts: string[] = [];
  for (let i = 0; i <= 240; i++) {
    const a = (i / 240) * Math.PI * 2;
    const r = 29.300 + 2.700 * Math.cos(8 * a) - 0.600 * Math.cos(16 * a);
    pts.push(`${(35 + r * Math.sin(a)).toFixed(2)} ${(35 - r * Math.cos(a)).toFixed(2)}`);
  }
  return `M${pts.join('L')}Z`;
})();

const GearIcon = ({ className }: IconProps) => (
  <svg viewBox="0 0 70 70" className={className} fill="none" stroke="#999" strokeWidth="4" strokeLinejoin="round">
    <path d={gearOutline} />
    <circle cx="35" cy="35" r="13" />
  </svg>
);

const TrashIcon = ({ className }: IconProps) => (
  <svg viewBox="0 0 60 72" className={className} fill="none" stroke="#999" strokeWidth="4" strokeLinecap="round">
    <path d="M25 2.500H35M2 12H58" />
    <path d="M6.500 12V42C6.500 58 16 69 30 69S53.500 58 53.500 42V12" />
    <path d="M18 24V55M30 24V61M42 24V55" strokeWidth="3.600" />
  </svg>
);

const HandCursor = ({ className }: IconProps) => (
  <svg viewBox="260 330 550 470" className={className} fill="none" stroke="#000" strokeWidth="30" strokeLinecap="round" strokeLinejoin="round">
    <path d="M483 630 302 417 292 385 325 358 358 370 450 475 490 434 522 440 555 398 590 395 623 365 655 378 705 435 781 582 570 769 372 650 351 615 388 580Z" fill="#fff" stroke="none" />
    <path d="M483 631 302 418C285 396 291 375 304 365C320 353 344 354 358 370L505 545" />
    <path d="M457 466C454 449 470 434 489 434C503 434 512 441 520 451L561 497" />
    <path d="M522 432C520 414 535 399 555 398C568 398 578 404 586 414L616 450" />
    <path d="M590 394C592 377 606 365 624 365C637 365 648 371 656 381L704 437C738 478 764 528 781 582" />
    <path d="M483 631 405 586C379 572 351 590 351 617C351 632 359 642 372 650L570 769" />
  </svg>
);

const CONTROLLERS = ['유니트쿨러1', '유니트쿨러2', '유니트쿨러3', '온습도 센서', '공조기'];

const Dialog = () => (
  <section className="mt-[436px] flex h-[1819px] w-[1593px] flex-col bg-white">
    <div className="flex h-[306px] items-start justify-between border-b-[3px] border-[#aaa] pt-[80px] pr-[102px] pl-[115px]">
      <div className="flex flex-col">
        <span className="text-[49px] leading-[52px] font-semibold tracking-[-0.500px] text-[#74b205]">Controller Setting</span>
        <span className="mt-[8px] text-[80px] leading-[84px] font-bold tracking-[-1.500px] text-[#2d2d2d]">컨트롤러 설정</span>
      </div>
      <svg viewBox="0 0 64 64" className="mt-[39px] h-[64px] w-[64px]" fill="none" stroke="#999" strokeWidth="4.200" strokeLinecap="round">
        <path d="M3 3 61 61M61 3 3 61" />
      </svg>
    </div>
    <div className="flex h-[1260px]">
      <div className="w-[1558px] shrink-0 border-r-2 border-[#e9e9df] pt-[140px] pl-[318px]">
        <div className="ml-[3px] flex w-[991px] flex-col">
          {CONTROLLERS.map((name) => (
            <div key={name} className="flex h-[153.700px] items-center border-b-[2.500px] border-[#aaa] pt-[3px] pr-[20px] pl-[71px] last:border-b-0 last:pt-0">
              <span className="flex-1 text-[64px] leading-none font-bold tracking-[-1px] text-[#2d2d2d]">{name}</span>
              <GearIcon className="h-[70px] w-[70px]" />
              <TrashIcon className="ml-[57px] h-[72px] w-[60px]" />
            </div>
          ))}
        </div>
        <div className="relative mt-[39px] flex h-[153px] w-[995px] items-center rounded-[22px] border-4 border-[#74b205] pl-[278px] text-[#74b205]">
          <svg viewBox="0 0 48 48" className="-mt-[2px] h-[48px] w-[48px]" fill="none" stroke="currentColor" strokeWidth="4.200" strokeLinecap="round">
            <path d="M24 2.500V45.500M2.500 24H45.500" />
          </svg>
          <span className="ml-[34px] text-[54px] leading-none font-bold tracking-[-0.700px]">컨트롤러 추가</span>
          <div className="absolute top-[34px] left-[628px] h-[115px] w-[115px] rounded-full bg-[#d3e7a5] mix-blend-multiply" />
          <div className="absolute top-[63px] left-[657px] h-[58px] w-[58px] rounded-full bg-[#a4d252] mix-blend-multiply" />
          <HandCursor className="absolute top-[76px] left-[667.700px] h-[156.700px] w-[183.300px]" />
        </div>
      </div>
      <div className="pt-[10px] pl-[8px]">
        <div className="h-[354px] w-[18px] rounded-full bg-[#d3d3c9]" />
      </div>
    </div>
    <div className="flex flex-1 items-center justify-center bg-[#f1f1ea]">
      <div className="flex h-[111px] w-[592px] items-center justify-center rounded-full bg-[#74b205] pt-[2px] text-[56px] leading-none font-bold text-white">저 장</div>
    </div>
  </section>
);

export default function App() {
  return (
    <div className="relative h-[2690px] w-[3587px] overflow-hidden bg-white font-['Inter','Noto_Sans_CJK_KR',sans-serif] [font-optical-sizing:none]">
      <Header />
      <div className="flex">
        <Sidebar />
        <Main />
      </div>
      <div className="absolute inset-0 flex items-start bg-black/35 pl-[997px]">
        <Dialog />
      </div>
    </div>
  );
}
